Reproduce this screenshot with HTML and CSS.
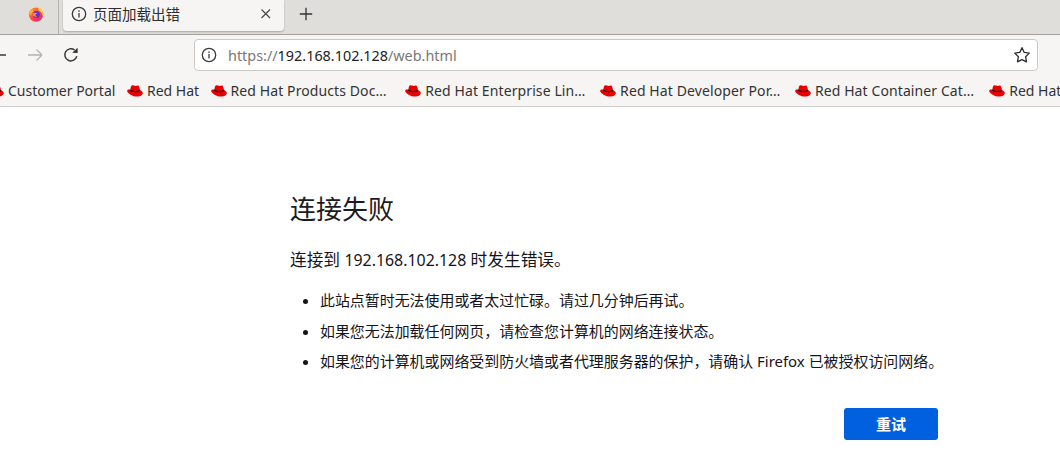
FILE: index.html
```html
<!DOCTYPE html>
<html lang="zh-CN">
<head>
<meta charset="utf-8">
<title>页面加载出错</title>
<link rel="stylesheet" href="styles.css">
</head>
<body>
<header class="tabbar">
  <div class="pinned">
    <svg class="fx" viewBox="0 0 16 16" width="16" height="16">
      <defs>
        <linearGradient id="fxa" x1="0" y1="0" x2="1" y2="1"><stop offset="0" stop-color="#ff9a1f"/><stop offset=".55" stop-color="#ff3f4e"/><stop offset="1" stop-color="#d6217f"/></linearGradient>
      </defs>
      <circle cx="8" cy="8.6" r="7.2" fill="url(#fxa)"/>
      <path d="M10 0.4c2.6 1.3 4.8 3.6 5.2 7 .1 1-.2 2-.6 2.8-.3-2.8-1.8-5-4.6-6.3C10.4 2.8 10.5 1.500 10 .4z" fill="#ffd23c"/>
      <path d="M1.200 6.500C2 4 4 3.200 5.500 3.400 4.800 4.400 5 5.200 5.800 5.400 4 6 2.800 7.500 3.200 9.800 2 9.200 1.300 8 1.200 6.500z" fill="#ffb02e"/>
      <circle cx="8.300" cy="8.400" r="3.500" fill="#6a2bd0"/>
      <path d="M5 7.200c1.600-.8 3.400-.6 4.300.5-1 .1-1.900.5-1.900 1.200 0 .8 1 1.200 2 1-.9 1-2.500 1.200-3.500.4C5 9.600 4.700 8.300 5 7.200z" fill="#ff8a3c"/>
    </svg>
  </div>
  <div class="tab">
    <svg class="ico" viewBox="0 0 16 16" width="16" height="16"><circle cx="8" cy="8" r="6.700" fill="none" stroke="#3a3a3a" stroke-width="1.300"/><rect x="7.350" y="7" width="1.300" height="4.500" fill="#3a3a3a"/><rect x="7.350" y="4.400" width="1.300" height="1.500" fill="#3a3a3a"/></svg>
    <span class="tab-title">页面加载出错</span>
    <svg class="close" viewBox="0 0 12 12" width="12" height="12"><path d="M1.500 1.500l8.500 8.500M10 1.500l-8.500 8.500" stroke="#444" stroke-width="1.100" fill="none"/></svg>
  </div>
  <svg class="newtab" viewBox="0 0 14 14" width="14" height="14"><path d="M7 .8v12.400M.8 7h12.400" stroke="#333" stroke-width="1.300" fill="none"/></svg>
</header>
<nav class="navbar">
  <svg class="back" viewBox="0 0 16 16" width="16" height="16"><path d="M1 8h14M1 8l5.500-5.500M1 8l5.500 5.500" stroke="#3a3a3a" stroke-width="1.300" fill="none"/></svg>
  <svg class="forward" viewBox="0 0 16 16" width="16" height="16"><path d="M1 8h14M15 8L9.500 2.500M15 8l-5.500 5.500" stroke="#b3b3b3" stroke-width="1.300" fill="none"/></svg>
  <svg class="reload" viewBox="0 0 16 16" width="16" height="16"><path d="M13.800 9.200A6.100 6.100 0 1 1 11.600 3" stroke="#333" stroke-width="1.400" fill="none"/><path d="M9.200 5.800L14.600 6V.8z" fill="#333"/></svg>
  <div class="urlbar">
    <svg class="ico" viewBox="0 0 16 16" width="16" height="16"><circle cx="8" cy="8" r="6.700" fill="none" stroke="#3a3a3a" stroke-width="1.300"/><rect x="7.350" y="7" width="1.300" height="4.500" fill="#3a3a3a"/><rect x="7.350" y="4.400" width="1.300" height="1.500" fill="#3a3a3a"/></svg>
    <span class="url"><span class="dim">https://</span>192.168.102.128<span class="dim">/web.html</span></span>
    <svg class="star" viewBox="0 0 18 18" width="18" height="18"><path d="M9 1.700l2.200 4.700 5.100.7-3.700 3.600.9 5.100L9 13.600l-4.500 2.200.9-5.100L1.700 7.100l5.100-.7z" fill="none" stroke="#2e2e2e" stroke-width="1.300" stroke-linejoin="round"/></svg>
  </div>
</nav>
<div class="bookmarks">
  <a class="bm first"><svg class="hat" width="16" height="12"><use href="#hat"/></svg><span>Customer Portal</span></a>
  <a class="bm short"><svg class="hat" width="16" height="12"><use href="#hat"/></svg><span>Red Hat</span></a>
  <a class="bm long"><svg class="hat" width="16" height="12"><use href="#hat"/></svg><span>Red Hat Products Doc…</span></a>
  <a class="bm long"><svg class="hat" width="16" height="12"><use href="#hat"/></svg><span>Red Hat Enterprise Lin…</span></a>
  <a class="bm long"><svg class="hat" width="16" height="12"><use href="#hat"/></svg><span>Red Hat Developer Por…</span></a>
  <a class="bm long"><svg class="hat" width="16" height="12"><use href="#hat"/></svg><span>Red Hat Container Cat…</span></a>
  <a class="bm last"><svg class="hat" width="16" height="12"><use href="#hat"/></svg><span>Red Hat</span></a>
</div>
<svg class="defs" width="0" height="0">
  <symbol id="hat" viewBox="0 0 16 12">
    <path d="M4.800.5C5.900 0 7.300.9 8.400.9c1.100 0 2-.6 2.900-.3 1 .4 1.300 3 1.700 4.400.9.500 2.800 1.500 2.800 3 0 1.900-2.400 3.600-5.600 3.600C6 11.600.2 8.200.2 5.900c0-.9.800-1.400 1.800-1.400.5 0 1 .1 1.300.2C3.600 3 4 .9 4.800.5z" fill="#e60000"/>
    <path d="M3.200 4.500c1.700 1.200 5.800 2.600 9.700.6l.3 1c-3.300 1.900-8 1.100-10.200-.6z" fill="#151515"/>
  </symbol>
</svg>
<main class="page">
  <div class="error">
    <h1 class="title">连接失败</h1>
    <p class="desc">连接到 <span class="ip">192.168.102.128</span> 时发生错误。</p>
    <ul class="tips">
      <li>此站点暂时无法使用或者太过忙碌。请过几分钟后再试。</li>
      <li>如果您无法加载任何网页，请检查您计算机的网络连接状态。</li>
      <li>如果您的计算机或网络受到防火墙或者代理服务器的保护，请确认 Firefox 已被授权访问网络。</li>
    </ul>
    <div class="actions"><button class="retry">重试</button></div>
  </div>
</main>
</body>
</html>
```
FILE: styles.css
```css
* { box-sizing: border-box; }
html, body { margin: 0; padding: 0; height: 100%; overflow: hidden; background: #fff; }
body { font-family: "Noto Sans", "Noto Sans CJK SC", sans-serif; color: #15141a; }
.defs { display: block; height: 0; }

.tabbar { height: 35px; background: #e0dedb; border-bottom: 1px solid #a3a19e; display: flex; align-items: flex-start; }
.pinned { width: 59px; height: 34px; border-right: 1px solid #b5b3b0; display: flex; justify-content: flex-end; padding: 6px 14px 0 0; }
.fx { display: block; }
.tab { width: 221px; height: 31px; margin-left: 4px; background: #f6f5f4; border-radius: 0 0 4px 4px; box-shadow: 0 1px 2px rgba(0,0,0,.25); display: flex; align-items: center; padding: 0 12px 3px 8px; color: #2e2e2e; }
.ico { flex: none; display: block; }
.tab-title { font-size: 14.500px; margin-left: 6px; flex: 1; line-height: 20px; }
.close { flex: none; }
.newtab { margin: 7px 0 0 15px; flex: none; }

.navbar { height: 37px; background: #f6f5f4; display: flex; align-items: center; padding-top: 3px; }
.back { margin-left: -9px; flex: none; }
.forward { margin-left: 20px; flex: none; }
.reload { margin-left: 20px; flex: none; }
.urlbar { width: 844px; height: 32px; margin-left: 115px; background: #fff; border: 1px solid #ccc9c5; border-radius: 4px; display: flex; align-items: center; padding: 0 6px 0 6px; }
.url { flex: 1; margin-left: 11px; font-size: 14.400px; color: #222; white-space: nowrap; }
.dim { color: #787878; }
.star { flex: none; }

.bookmarks { height: 35px; background: #f6f5f4; border-bottom: 1px solid #cfcdca; display: flex; align-items: center; overflow: hidden; padding-top: 3px; }
.bm { display: flex; align-items: center; gap: 4px; flex: none; font-size: 14px; color: #333; white-space: nowrap; }
.hat { flex: none; }
.first { margin-left: -12px; width: 139px; }
.short { width: 83.500px; }
.long { width: 194.800px; letter-spacing: .1px; }
.last { margin-left: -.5px; }

.page { padding: 84px 0 0 290px; }
.error { width: 648px; }
.title { margin: 0; font-size: 26px; font-weight: 400; line-height: 36px; color: #1c1b22; }
.desc { margin: 21px 0 0; font-size: 16.700px; line-height: 24px; }
.ip { font-size: 15.900px; }
.tips { margin: 17px 0 0; padding: 0 0 0 30px; font-size: 14.950px; line-height: 22px; }
.tips li { margin-bottom: 8.500px; white-space: nowrap; }
.actions { display: flex; justify-content: flex-end; margin-top: 35.500px; }
.retry { width: 94px; height: 32px; border: 0; border-radius: 3px; background: #0060df; color: #fff; font: 700 15px "Noto Sans", "Noto Sans CJK SC", sans-serif; padding: 0; }
```
